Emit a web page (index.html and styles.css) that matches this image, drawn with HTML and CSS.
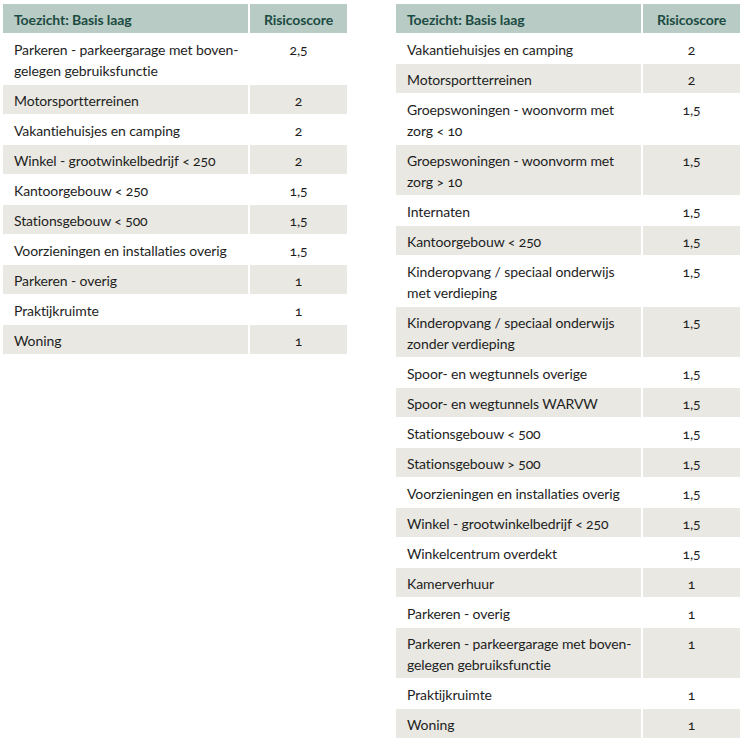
FILE: index.html
```html
<!DOCTYPE html>
<html lang="nl">
<head>
<meta charset="utf-8">
<title>Toezicht: Basis laag</title>
<link rel="stylesheet" href="styles.css">
</head>
<body>
<div class="page">
  <table class="risk">
    <thead>
      <tr><th class="name">Toezicht: Basis laag</th><th class="score">Risicoscore</th></tr>
    </thead>
    <tbody>
      <tr><td class="name">Parkeren - parkeergarage met boven-<br>gelegen gebruiksfunctie</td><td class="score">2,5</td></tr>
      <tr><td class="name">Motorsportterreinen</td><td class="score">2</td></tr>
      <tr><td class="name">Vakantiehuisjes en camping</td><td class="score">2</td></tr>
      <tr><td class="name">Winkel - grootwinkelbedrijf &lt; 250</td><td class="score">2</td></tr>
      <tr><td class="name">Kantoorgebouw &lt; 250</td><td class="score">1,5</td></tr>
      <tr><td class="name">Stationsgebouw &lt; 500</td><td class="score">1,5</td></tr>
      <tr><td class="name">Voorzieningen en installaties overig</td><td class="score">1,5</td></tr>
      <tr><td class="name">Parkeren - overig</td><td class="score">1</td></tr>
      <tr><td class="name">Praktijkruimte</td><td class="score">1</td></tr>
      <tr><td class="name">Woning</td><td class="score">1</td></tr>
    </tbody>
  </table>
  <table class="risk">
    <thead>
      <tr><th class="name">Toezicht: Basis laag</th><th class="score">Risicoscore</th></tr>
    </thead>
    <tbody>
      <tr><td class="name">Vakantiehuisjes en camping</td><td class="score">2</td></tr>
      <tr><td class="name">Motorsportterreinen</td><td class="score">2</td></tr>
      <tr><td class="name">Groepswoningen - woonvorm met<br>zorg &lt; 10</td><td class="score">1,5</td></tr>
      <tr><td class="name">Groepswoningen - woonvorm met<br>zorg &gt; 10</td><td class="score">1,5</td></tr>
      <tr><td class="name">Internaten</td><td class="score">1,5</td></tr>
      <tr><td class="name">Kantoorgebouw &lt; 250</td><td class="score">1,5</td></tr>
      <tr><td class="name">Kinderopvang / speciaal onderwijs<br>met verdieping</td><td class="score">1,5</td></tr>
      <tr><td class="name">Kinderopvang / speciaal onderwijs<br>zonder verdieping</td><td class="score">1,5</td></tr>
      <tr><td class="name">Spoor- en wegtunnels overige</td><td class="score">1,5</td></tr>
      <tr><td class="name">Spoor- en wegtunnels WARVW</td><td class="score">1,5</td></tr>
      <tr><td class="name">Stationsgebouw &lt; 500</td><td class="score">1,5</td></tr>
      <tr><td class="name">Stationsgebouw &gt; 500</td><td class="score">1,5</td></tr>
      <tr><td class="name">Voorzieningen en installaties overig</td><td class="score">1,5</td></tr>
      <tr><td class="name">Winkel - grootwinkelbedrijf &lt; 250</td><td class="score">1,5</td></tr>
      <tr><td class="name">Winkelcentrum overdekt</td><td class="score">1,5</td></tr>
      <tr><td class="name">Kamerverhuur</td><td class="score">1</td></tr>
      <tr><td class="name">Parkeren - overig</td><td class="score">1</td></tr>
      <tr><td class="name">Parkeren - parkeergarage met boven-<br>gelegen gebruiksfunctie</td><td class="score">1</td></tr>
      <tr><td class="name">Praktijkruimte</td><td class="score">1</td></tr>
      <tr><td class="name">Woning</td><td class="score">1</td></tr>
    </tbody>
  </table>
</div>
</body>
</html>
```
FILE: styles.css
```css
html, body {
  margin: 0;
  padding: 0;
  background: #ffffff;
}

.page {
  display: flex;
  align-items: flex-start;
  gap: 49px;
  padding: 4px 0 0 3px;
  font-family: Lato, "Noto Sans", sans-serif;
  font-size: 14px;
  letter-spacing: -0.1px;
  color: #1e1e1e;
  font-variant-numeric: oldstyle-nums;
}

.risk {
  width: 344px;
  border-collapse: collapse;
  table-layout: fixed;
}

.risk th,
.risk td {
  padding: 5px 0 3px 11px;
  line-height: 21px;
  text-align: left;
  vertical-align: top;
  border-bottom: 1px solid #ffffff;
}

.risk th {
  background: #b8cbc4;
  color: #1c4b43;
  font-weight: bold;
}

.risk .name {
  width: 234px;
  border-right: 2px solid #ffffff;
}

.risk .score {
  text-align: center;
  padding-left: 0;
}

.risk tbody tr:nth-child(even) td {
  background: #e9e8e2;
}
```
